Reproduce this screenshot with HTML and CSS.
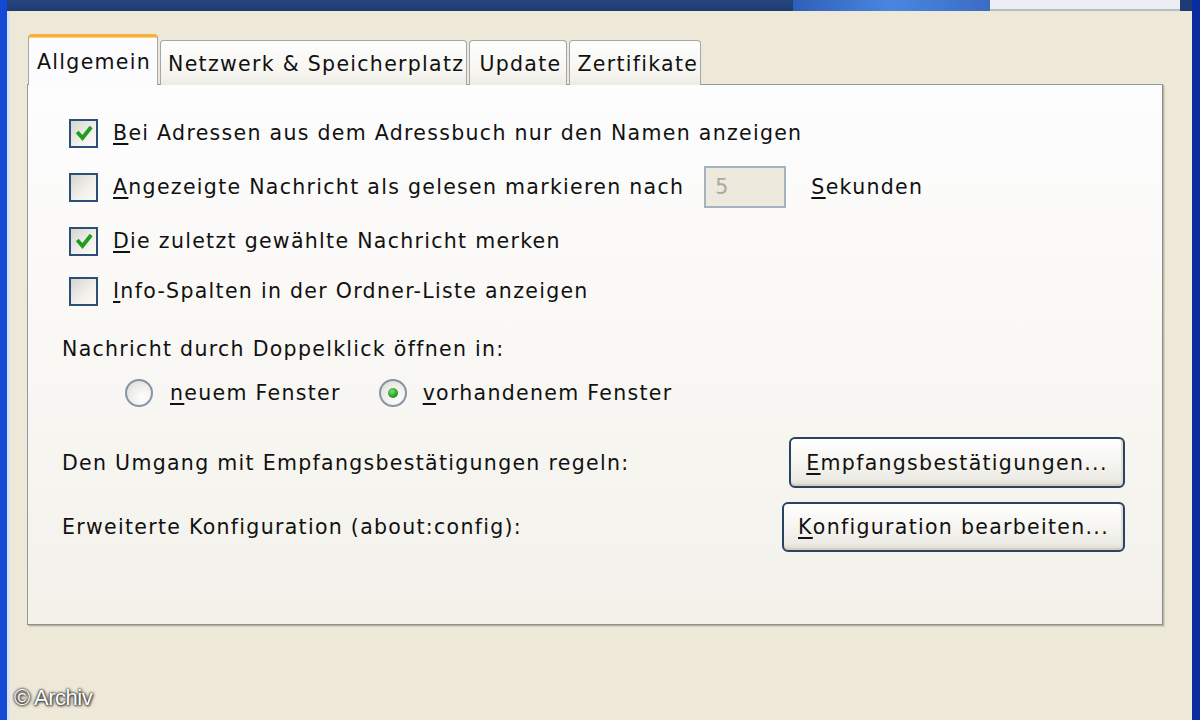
FILE: index.html
```html
<!DOCTYPE html>
<html lang="de">
<head>
<meta charset="utf-8">
<title>Einstellungen</title>
<link rel="stylesheet" href="styles.css">
</head>
<body>
<div class="window">
  <div class="titlebar">
    <div class="tb-dark"></div>
    <div class="tb-light"></div>
    <div class="tb-white"></div>
    <div class="tb-end"></div>
  </div>
  <div class="client">
    <div class="tabs">
      <div class="tab tab-active">Allgemein</div>
      <div class="tab">Netzwerk &amp; Speicherplatz</div>
      <div class="tab tab-update">Update</div>
      <div class="tab">Zertifikate</div>
    </div>
    <div class="panel">
      <div class="row row-check">
        <span class="checkbox checked"><svg viewBox="0 0 29 29" width="29" height="29"><polyline points="9.5,14.5 13.5,19 21,9.5" fill="none" stroke="#1f9d1f" stroke-width="3.8" stroke-linecap="square"/></svg></span>
        <span class="label"><u>B</u>ei Adressen aus dem Adressbuch nur den Namen anzeigen</span>
      </div>
      <div class="row row-check row-tall">
        <span class="checkbox"></span>
        <span class="label"><u>A</u>ngezeigte Nachricht als gelesen markieren nach</span>
        <span class="textbox">5</span>
        <span class="label"><u>S</u>ekunden</span>
      </div>
      <div class="row row-check">
        <span class="checkbox checked"><svg viewBox="0 0 29 29" width="29" height="29"><polyline points="9.5,14.5 13.5,19 21,9.5" fill="none" stroke="#1f9d1f" stroke-width="3.8" stroke-linecap="square"/></svg></span>
        <span class="label"><u>D</u>ie zuletzt gewählte Nachricht merken</span>
      </div>
      <div class="row row-check">
        <span class="checkbox"></span>
        <span class="label"><u>I</u>nfo-Spalten in der Ordner-Liste anzeigen</span>
      </div>
      <div class="row row-caption">
        <span class="label">Nachricht durch Doppelklick öffnen in:</span>
      </div>
      <div class="row row-radios">
        <span class="radio"></span>
        <span class="label"><u>n</u>euem Fenster</span>
        <span class="radio selected"><span class="dot"></span></span>
        <span class="label"><u>v</u>orhandenem Fenster</span>
      </div>
      <div class="row row-button">
        <span class="label">Den Umgang mit Empfangsbestätigungen regeln:</span>
        <span class="button btn-receipts"><u>E</u>mpfangsbestätigungen...</span>
      </div>
      <div class="row row-button row-button2">
        <span class="label">Erweiterte Konfiguration (about:config):</span>
        <span class="button btn-config"><u>K</u>onfiguration bearbeiten...</span>
      </div>
    </div>
  </div>
  <div class="watermark">© Archiv</div>
</div>
</body>
</html>
```

FILE: styles.css
```css
* { box-sizing: border-box; }

html, body {
  margin: 0;
  padding: 0;
  width: 1200px;
  height: 720px;
  overflow: hidden;
}

body {
  font-family: "DejaVu Sans", sans-serif;
  font-size: 20.5px;
  letter-spacing: 1.3px;
  color: #111;
}

.window {
  position: relative;
  width: 1200px;
  height: 720px;
  display: flex;
  flex-direction: column;
  border-left: 7px solid #1449d6;
  border-right: 8px solid #0a2c9e;
  background: #eee8d8;
}

.window::before {
  content: "";
  position: absolute;
  left: 0;
  top: 11px;
  bottom: 0;
  width: 3px;
  background: #d8e2f0;
}

.titlebar {
  display: flex;
  height: 11px;
  flex: none;
}

.tb-dark {
  flex: 1;
  background: linear-gradient(#27457f, #1e3a72);
}

.tb-light {
  width: 197px;
  background: linear-gradient(90deg, #2e5fb8, #4a86e0 50%, #3a6cc4);
}

.tb-white {
  width: 190px;
  background: #eceef4;
  border-bottom: 2px solid #b9bdc8;
}

.tb-end {
  width: 12px;
  background: #1e3a72;
}

.client {
  flex: 1;
  display: flex;
  flex-direction: column;
  padding: 23px 22px 0 20px;
}

.tabs {
  display: flex;
  align-items: flex-end;
  gap: 2px;
  padding-left: 1px;
  position: relative;
  z-index: 1;
  margin-bottom: -1px;
}

.tab {
  height: 45px;
  padding: 1px 2px 0 7px;
  display: flex;
  align-items: center;
  border: 1px solid #a3a7a9;
  border-bottom: none;
  border-radius: 4px 4px 0 0;
  background: linear-gradient(#fefefe, #f6f5f0 70%, #ecebe4);
  white-space: nowrap;
}

.tab-update {
  padding: 1px 5px 0 9px;
}

.tab-active {
  height: 51px;
  padding: 2px 6px 0 8px;
  background: #fcfcfe;
  border-top: 3px solid #f5b03e;
  border-radius: 4px 4px 0 0;
  box-shadow: inset 0 1px 0 #ffd27a;
}

.panel {
  width: 1136px;
  height: 541px;
  border: 1px solid #90999c;
  border-right-color: #8a9092;
  border-bottom-color: #8a9092;
  box-shadow: 1px 1px 0 #b9b5a6, 2px 2px 0 #d6d1c1;
  background: linear-gradient(#fdfdfe, #faf9f6 40%, #f3f1ea);
  padding: 23px 37px 0 34px;
  display: flex;
  flex-direction: column;
}

.row {
  display: flex;
  align-items: center;
  white-space: nowrap;
}

.row-check {
  height: 50px;
  padding-left: 7px;
}

.row-tall {
  height: 58px;
}

.checkbox {
  width: 29px;
  height: 29px;
  flex: none;
  border: 2px solid #2c4f78;
  background: linear-gradient(135deg, #d6d5cf, #efeee9 55%, #fbfbf9);
  margin-right: 15px;
  position: relative;
}

.checkbox svg {
  position: absolute;
  left: -2px;
  top: -2px;
}

.textbox {
  width: 82px;
  height: 42px;
  margin: 0 25px 0 20px;
  border: 2px solid #a5b2c0;
  background: #ede9dc;
  color: #a8a8a4;
  padding-left: 9px;
  display: flex;
  align-items: center;
}

.row-caption {
  height: 46px;
  margin-top: 10px;
}

.row-radios {
  height: 42px;
  padding-left: 63px;
}

.radio {
  width: 28px;
  height: 28px;
  flex: none;
  border-radius: 50%;
  border: 2px solid #8595a8;
  background: radial-gradient(circle at 65% 70%, #ffffff, #eeede8 55%, #d6d5ce);
  margin-right: 17px;
  display: flex;
  align-items: center;
  justify-content: center;
}

.radio.selected {
  margin-left: 38px;
  margin-right: 16px;
}

.dot {
  width: 10px;
  height: 10px;
  border-radius: 50%;
  background: radial-gradient(circle at 40% 35%, #7be07b, #22a022 60%, #187a18);
}

.row-button {
  justify-content: space-between;
  height: 51px;
  margin-top: 23px;
}

.row-button2 {
  height: 50px;
  margin-top: 14px;
}

.button {
  height: 100%;
  display: flex;
  align-items: center;
  justify-content: center;
  border: 2px solid #2b4260;
  border-radius: 6px;
  background: linear-gradient(#ffffff, #f7f6f2 45%, #ecebe5 85%, #dcdad2);
  box-shadow: inset 0 -2px 0 #d2cfc4, inset -2px 0 0 #e2e0d6;
  color: #111;
}

.btn-receipts {
  width: 336px;
}

.btn-config {
  width: 343px;
}

u {
  text-decoration-thickness: 2px;
  text-underline-offset: 3px;
}

.watermark {
  position: absolute;
  left: 7px;
  bottom: 9px;
  font-family: "Liberation Sans", Arial, sans-serif;
  font-size: 22px;
  color: #fff;
  text-shadow: 0 0 2px #222, 0 0 3px #333, 1px 1px 3px #444;
  letter-spacing: -0.5px;
}
```
